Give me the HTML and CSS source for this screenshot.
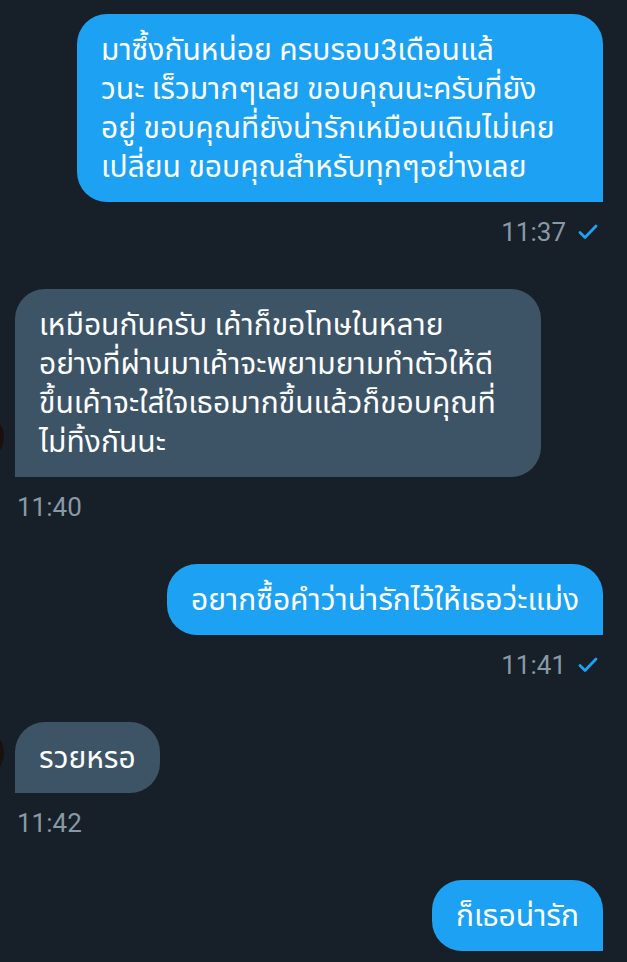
FILE: index.html
```html
<html>
  <head>
    <meta charset="utf-8">
    <link rel="stylesheet" href="styles.css">
  </head>
  <body>
    <div class="chat">
      <div class="msg sent">
        <div class="bubble wide">มาซึ้งกันหน่อย ครบรอบ3เดือนแล้<br>วนะ เร็วมากๆเลย ขอบคุณนะครับที่ยัง<br>อยู่ ขอบคุณที่ยังน่ารักเหมือนเดิมไม่เคย<br>เปลี่ยน ขอบคุณสำหรับทุกๆอย่างเลย</div>
        <div class="meta">11:37 <svg class="check" viewBox="0 0 20 16"><path d="M2 8.5l5 5L18 2"/></svg></div>
      </div>

      <div class="msg received">
        <div class="row">
          <div class="avatar"></div>
          <div class="bubble wide">เหมือนกันครับ เค้าก็ขอโทษในหลาย<br>อย่างที่ผ่านมาเค้าจะพยามยามทำตัวให้ดี<br>ขึ้นเค้าจะใส่ใจเธอมากขึ้นแล้วก็ขอบคุณที่<br>ไม่ทิ้งกันนะ</div>
        </div>
        <div class="meta">11:40</div>
      </div>

      <div class="msg sent">
        <div class="bubble">อยากซื้อคำว่าน่ารักไว้ให้เธอว่ะแม่ง</div>
        <div class="meta">11:41 <svg class="check" viewBox="0 0 20 16"><path d="M2 8.5l5 5L18 2"/></svg></div>
      </div>

      <div class="msg received">
        <div class="row">
          <div class="avatar"></div>
          <div class="bubble">รวยหรอ</div>
        </div>
        <div class="meta">11:42</div>
      </div>

      <div class="msg sent">
        <div class="bubble">ก็เธอน่ารัก</div>
      </div>
    </div>
  </body>
</html>
```

FILE: styles.css
```css
body {
  margin: 0;
  background: #171f28;
  font-family: Roboto, "Noto Sans Thai", "Noto Sans", sans-serif;
  color: #fff;
  overflow: hidden;
}
.chat {
  display: flex;
  flex-direction: column;
  padding: 14px 24px 0 15px;
}
.msg {
  display: flex;
  flex-direction: column;
  margin-bottom: 43px;
}
.msg.sent {
  align-items: flex-end;
}
.msg.received {
  align-items: flex-start;
}
.row {
  display: flex;
  align-items: flex-end;
}
.avatar {
  width: 48px;
  height: 48px;
  border-radius: 50%;
  background: #1a1010;
  margin-left: -59px;
  margin-right: 11px;
  margin-bottom: 16px;
  flex-shrink: 0;
}
.bubble {
  max-width: 478px;
  padding: 16px 24px;
  font-size: 30px;
  line-height: 39px;
  border-radius: 30px;
  white-space: nowrap;
}
.bubble.wide {
  width: 478px;
}
.sent .bubble {
  background: #1da1f2;
  border-bottom-right-radius: 0;
}
.received .bubble {
  background: #3d5466;
  border-bottom-left-radius: 0;
}
.meta {
  display: flex;
  align-items: center;
  margin-top: 16px;
  font-size: 26px;
  line-height: 28px;
  color: #8899a6;
}
.received .meta {
  margin-left: 2px;
}
.sent .meta {
  margin-right: 5px;
}
.check {
  width: 20px;
  height: 16px;
  margin-left: 12px;
  fill: none;
  stroke: #1da1f2;
  stroke-width: 2.8;
  stroke-linecap: round;
  stroke-linejoin: round;
}
```
